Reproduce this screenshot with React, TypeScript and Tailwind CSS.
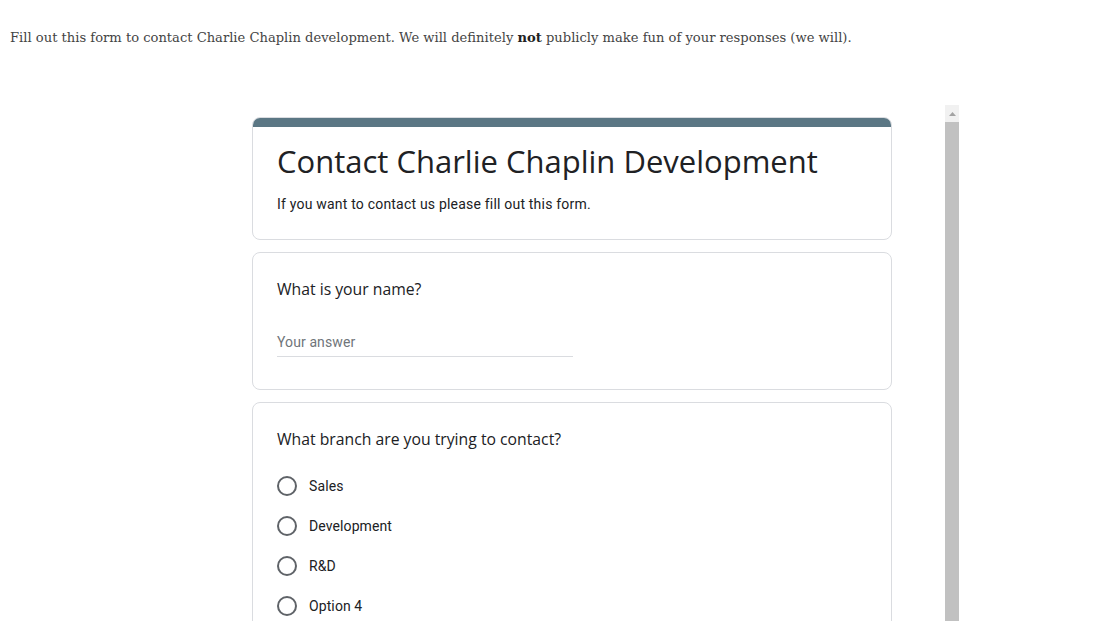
const options = ["Sales", "Development", "R&D", "Option 4"];

const gsans = "font-['Open_Sans','Noto_Sans',sans-serif]";
const roboto = "font-['Roboto','Liberation_Sans',sans-serif]";

function Card({ children, accent = false }: { children: React.ReactNode; accent?: boolean }) {
  return (
    <div className="w-[640px] mx-auto bg-white border border-[#dadce0] rounded-lg overflow-hidden">
      {accent && <div className="h-[10px] bg-[#5b7784] -mx-px -mt-px" />}
      {children}
    </div>
  );
}

export default function App() {
  return (
    <div className="h-[621px] overflow-hidden bg-white">
      <p className="pt-[26px] pl-[10px] text-[13.1px] leading-6 text-[#444] font-['DejaVu_Serif',serif]">
        Fill out this form to contact Charlie Chaplin development. We will definitely{" "}
        <strong className="font-bold text-[#222]">not</strong> publicly make fun of your responses (we will).
      </p>

      {/* embedded form */}
      <div className="mt-[55px] ml-[199px] w-[760px] h-[600px] flex">
        <div className="flex-1 pt-3 flex flex-col gap-3">
          <Card accent>
            <div className="px-6 pt-[14px] pb-[25px]">
              <h1 className={`${gsans} text-[31px] leading-10 text-[#202124]`}>
                Contact Charlie Chaplin Development
              </h1>
              <p className={`${roboto} mt-[13px] text-[14px] leading-5 tracking-[0.2px] text-[#202124]`}>
                If you want to contact us please fill out this form.
              </p>
            </div>
          </Card>

          <Card>
            <div className="px-6 pt-6 pb-[32px]">
              <div className={`${gsans} text-[15.75px] leading-6 text-[#202124]`}>What is your name?</div>
              <div className={`${roboto} mt-[31px] w-[296px] pb-[4px] border-b border-[#dadce0] text-[14px] leading-5 tracking-[0.1px] text-[#70757a]`}>
                Your answer
              </div>
            </div>
          </Card>

          <Card>
            <div className="px-6 pt-6 pb-6">
              <div className={`${gsans} text-[15.75px] leading-6 text-[#202124]`}>
                What branch are you trying to contact?
              </div>
              <div className="mt-[15px] flex flex-col">
                {options.map((o) => (
                  <label key={o} className="h-10 flex items-center gap-3">
                    <span className="w-5 h-5 rounded-full border-2 border-[#5f6368] shrink-0" />
                    <span className={`${roboto} text-[14px] tracking-[0.1px] text-[#202124]`}>{o}</span>
                  </label>
                ))}
              </div>
            </div>
          </Card>
        </div>

        {/* scrollbar */}
        <div className="w-[14px] flex flex-col bg-[#f1f1f1]">
          <div className="h-[17px] flex items-center justify-center">
            <svg width="7" height="4" viewBox="0 0 7 4">
              <path d="M0 4 L3.5 0 L7 4 Z" fill="#a3a3a3" />
            </svg>
          </div>
          <div className="flex-1 bg-[#c1c1c1]" />
        </div>
      </div>
    </div>
  );
}
